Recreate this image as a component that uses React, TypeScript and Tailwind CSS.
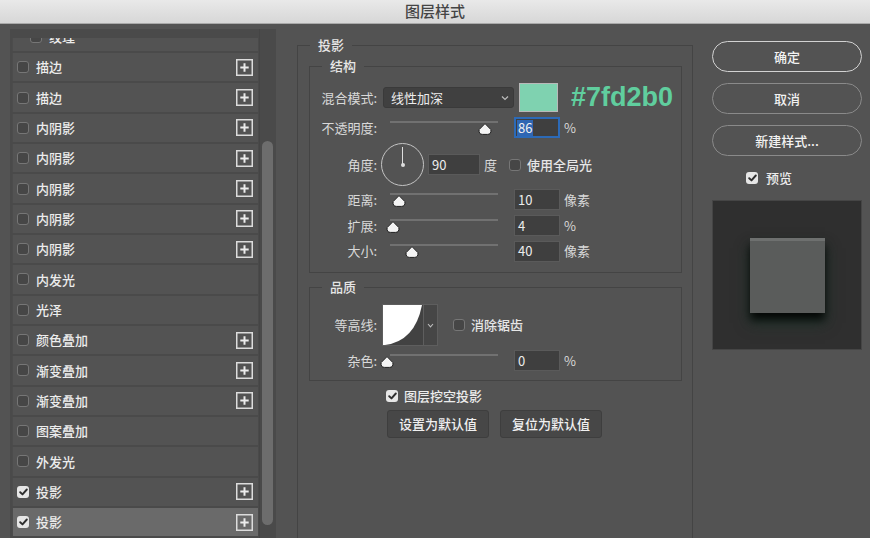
import { ReactNode } from "react";

const FONT = { fontFamily: '"Noto Sans CJK SC", "Noto Sans", sans-serif' };

const layers: { name: string; checked?: boolean; plus?: boolean; indent?: boolean; selected?: boolean }[] = [
  { name: "纹理", indent: true },
  { name: "描边", plus: true },
  { name: "描边", plus: true },
  { name: "内阴影", plus: true },
  { name: "内阴影", plus: true },
  { name: "内阴影", plus: true },
  { name: "内阴影", plus: true },
  { name: "内阴影", plus: true },
  { name: "内发光" },
  { name: "光泽" },
  { name: "颜色叠加", plus: true },
  { name: "渐变叠加", plus: true },
  { name: "渐变叠加", plus: true },
  { name: "图案叠加" },
  { name: "外发光" },
  { name: "投影", checked: true, plus: true },
  { name: "投影", checked: true, plus: true, selected: true },
];

const Checkbox = ({ checked }: { checked?: boolean }) =>
  checked ? (
    <span className="flex h-[12px] w-[12px] shrink-0 items-center justify-center rounded-[3px] bg-[#e6e6e6]">
      <svg width="9" height="8" viewBox="0 0 9 8">
        <path d="M1.2 4.2 L3.5 6.4 L7.8 1.5" fill="none" stroke="#2e2e2e" strokeWidth="1.9" strokeLinecap="round" strokeLinejoin="round" />
      </svg>
    </span>
  ) : (
    <span className="block h-[12px] w-[12px] shrink-0 rounded-[3px] border border-[#767676] bg-[#464646]" />
  );

const PlusBox = () => (
  <svg width="17" height="17" viewBox="0 0 17 17">
    <rect x="0.75" y="0.75" width="15.5" height="15.5" fill="none" stroke="#dcdcdc" strokeWidth="1.5" />
    <path d="M8.5 4.3 V12.7 M4.3 8.5 H12.7" stroke="#ececec" strokeWidth="2" />
  </svg>
);

const Thumb = () => (
  <svg width="14" height="12" viewBox="0 0 14 12">
    <path d="M7 0.6 L12.9 6.6 Q13.5 11.4 9.4 11.4 L4.6 11.4 Q0.5 11.4 1.1 6.6 Z" fill="#f4f4f4" stroke="#1f1f1f" strokeWidth="1" />
  </svg>
);

const Slider = ({ at }: { at: number }) => (
  <div className="relative h-full w-[108px] shrink-0">
    <div className="absolute left-0 right-0 top-[calc(50%-7px)] h-[2px] bg-[#717171]" />
    <div className="absolute top-[calc(50%-5px)]" style={{ left: at - 7 }}>
      <Thumb />
    </div>
  </div>
);

const NumBox = ({ value, w = 46, active }: { value: string; w?: number; active?: boolean }) => (
  <div
    className={
      active
        ? "flex h-[21px] shrink-0 items-center border-2 border-[#2c6ab7] bg-[#3f3f3f] pl-[1px]"
        : "flex h-[21px] shrink-0 items-center border border-[#5a5a5a] bg-[#3f3f3f] pl-[3px]"
    }
    style={{ width: w }}
  >
    <span className={active ? "bg-[#2f66b3] px-[1px] text-[13px] leading-[16px] text-[#f0f0f0]" : "text-[13px] leading-[16px] text-[#ececec]"}>
      {value}
    </span>
  </div>
);

const Label = ({ children }: { children: ReactNode }) => (
  <span className="w-[67px] shrink-0 text-right text-[13px] text-[#d9d9d9]">{children}</span>
);

const SliderRow = ({ label, at, value, unit, h, active }: { label: string; at: number; value: string; unit: string; h: number; active?: boolean }) => (
  <div className="flex items-center" style={{ height: h }}>
    <Label>{label}</Label>
    <div className="ml-[13px] h-full">
      <Slider at={at} />
    </div>
    <div className="ml-[16px]">
      <NumBox value={value} active={active} />
    </div>
    <span className="ml-[4px] text-[13px] text-[#d9d9d9]">{unit}</span>
  </div>
);

export default function App() {
  return (
    <div className="h-[538px] w-[870px] overflow-hidden bg-[#535353]" style={FONT}>
      <div className="flex h-[24px] items-center justify-center border-b border-[#a9a9a9] bg-gradient-to-b from-[#e9e9e9] to-[#d7d7d7]">
        <span className="text-[15px] font-medium text-[#454545]">图层样式</span>
      </div>

      <div className="flex h-[514px]">
        {/* left list */}
        <div className="ml-[10px] mt-[5px] flex h-[509px] w-[266px] shrink-0 bg-[#4a4a4a]">
          <div className="mt-[9px] h-[500px] w-[248px] overflow-hidden pl-[2px]">
            <div className="-mt-[15.3px] flex flex-col gap-[2px]">
              {layers.map((l, i) => (
                <div
                  key={i}
                  className={
                    "flex h-[28.33px] items-center border-l border-[#4c4c4c] pr-[5px] " +
                    (l.selected ? "bg-[#6a6a6a]" : "bg-[#535353]") +
                    (l.indent ? " pl-[17px]" : " pl-[4px]")
                  }
                >
                  <Checkbox checked={l.checked} />
                  <span className="ml-[7px] text-[13px] font-medium text-[#ececec]">{l.name}</span>
                  {l.plus && (
                    <span className="ml-auto flex">
                      <PlusBox />
                    </span>
                  )}
                </div>
              ))}
            </div>
          </div>
          <div className="ml-[1px] flex h-full w-[15px] justify-center border-l border-[#454545] pt-[112px]">
            <div className="h-[384px] w-[11px] rounded-full bg-[#6d6d6d]" />
          </div>
        </div>

        {/* middle settings */}
        <div className="ml-[21px] w-[396px] shrink-0 pt-[13px]">
          <fieldset className="h-[520px] border border-[#444444] pl-[11px] pr-[10px]">
            <legend className="ml-[1px] px-[8px] text-[13px] font-medium leading-[16px] text-[#e6e6e6]">投影</legend>

            <fieldset className="mt-[5px] border border-[#444444] pb-[8px] pt-[9px]">
              <legend className="ml-[12px] px-[8px] text-[13px] font-medium leading-[16px] text-[#e6e6e6]">结构</legend>

              <div className="flex h-[29px] items-center">
                <Label>混合模式:</Label>
                <div className="ml-[6px] flex h-[21px] w-[131px] items-center justify-between rounded-[3px] border border-[#3a3a3a] bg-[#404040] pl-[7px] pr-[4px]">
                  <span className="text-[13px] text-[#ececec]">线性加深</span>
                  <svg width="8" height="6" viewBox="0 0 8 6">
                    <path d="M1 1.5 L4 4.5 L7 1.5" fill="none" stroke="#bdbdbd" strokeWidth="1.2" />
                  </svg>
                </div>
                <div className="ml-[5px] h-[29px] w-[39px] border border-[#b9b9b9] bg-[#7fd2b0]" />
                <span className="ml-[13px] text-[27px] font-bold leading-none text-[#60ce9e]" style={{ fontFamily: '"Liberation Sans", Arial, sans-serif' }}>
                  #7fd2b0
                </span>
              </div>

              <SliderRow label="不透明度:" at={95} value="86" unit="%" h={31} active />

              <div className="flex h-[43px] items-center">
                <Label>角度:</Label>
                <div className="relative ml-[4px] h-[43px] w-[43px] shrink-0 rounded-full border border-[#c4c4c4]">
                  <div className="absolute left-[20px] top-[3px] h-[18px] w-[1px] bg-[#dedede]" />
                  <div className="absolute left-[18.5px] top-[18.5px] h-[4px] w-[4px] rounded-full bg-[#dedede]" />
                </div>
                <div className="ml-[4px]">
                  <NumBox value="90" w={52} />
                </div>
                <span className="ml-[4px] text-[13px] text-[#d9d9d9]">度</span>
                <span className="ml-[12px]">
                  <Checkbox />
                </span>
                <span className="ml-[6px] text-[13px] font-medium text-[#e6e6e6]">使用全局光</span>
              </div>

              <SliderRow label="距离:" at={9} value="10" unit="像素" h={27} />
              <SliderRow label="扩展:" at={3} value="4" unit="%" h={25} />
              <SliderRow label="大小:" at={22} value="40" unit="像素" h={26} />
            </fieldset>

            <fieldset className="mt-[6px] border border-[#444444] pb-[5px] pt-[9px]">
              <legend className="ml-[12px] px-[8px] text-[13px] font-medium leading-[16px] text-[#e6e6e6]">品质</legend>

              <div className="flex h-[42px] items-center">
                <Label>等高线:</Label>
                <div className="ml-[5px] flex h-[42px] border border-[#5e5e5e]">
                  <svg width="40" height="40" viewBox="0 0 40 40" className="block">
                    <rect width="40" height="40" fill="#424242" />
                    <path d="M0 0 H39 Q32 36 2 40 H0 Z" fill="#ffffff" />
                  </svg>
                  <div className="flex w-[14px] items-center justify-center border-l border-[#5e5e5e] bg-[#464646]">
                    <svg width="7" height="5" viewBox="0 0 7 5">
                      <path d="M1 1 L3.5 3.8 L6 1" fill="none" stroke="#bdbdbd" strokeWidth="1.1" />
                    </svg>
                  </div>
                </div>
                <span className="ml-[15px]">
                  <Checkbox />
                </span>
                <span className="ml-[6px] text-[13px] font-medium text-[#e6e6e6]">消除锯齿</span>
              </div>

              <SliderRow label="杂色:" at={-3} value="0" unit="%" h={29} />
            </fieldset>

            <div className="mt-[5px] flex items-center pl-[77px]">
              <Checkbox checked />
              <span className="ml-[6px] text-[13px] font-medium text-[#ececec]">图层挖空投影</span>
            </div>
            <div className="mt-[4px] flex gap-[11px] pl-[78px]">
              <button className="h-[28px] w-[102px] rounded-[3px] border border-[#3e3e3e] bg-[#474747] text-[13px] font-medium text-[#f0f0f0]">
                设置为默认值
              </button>
              <button className="h-[28px] w-[102px] rounded-[3px] border border-[#3e3e3e] bg-[#474747] text-[13px] font-medium text-[#f0f0f0]">
                复位为默认值
              </button>
            </div>
          </fieldset>
        </div>

        {/* right buttons and preview */}
        <div className="ml-[19px] flex w-[150px] shrink-0 flex-col pt-[17px]">
          <button className="h-[31px] w-full rounded-full border-[1.5px] border-[#d2d2d2] text-[13px] font-medium text-[#f2f2f2]">确定</button>
          <button className="mt-[11px] h-[31px] w-full rounded-full border-[1.5px] border-[#8a8a8a] text-[13px] font-medium text-[#f2f2f2]">取消</button>
          <button className="mt-[11px] h-[31px] w-full rounded-full border-[1.5px] border-[#8a8a8a] text-[13px] font-medium text-[#f2f2f2]">新建样式...</button>
          <div className="mt-[9px] flex h-[26px] items-center pl-[34px]">
            <Checkbox checked />
            <span className="ml-[8px] text-[13px] font-medium text-[#ececec]">预览</span>
          </div>
          <div className="mt-[9px] flex h-[150px] w-[150px] items-center justify-center border border-[#454545] bg-[#2f2f2f]">
            <div className="h-[75px] w-[75px] border-t-[3px] border-[#6e706f] bg-[#5a5c5b] shadow-[0_7px_9px_rgba(0,0,0,0.9),0_10px_14px_rgba(25,70,50,0.5)]" />
          </div>
        </div>
      </div>
    </div>
  );
}
